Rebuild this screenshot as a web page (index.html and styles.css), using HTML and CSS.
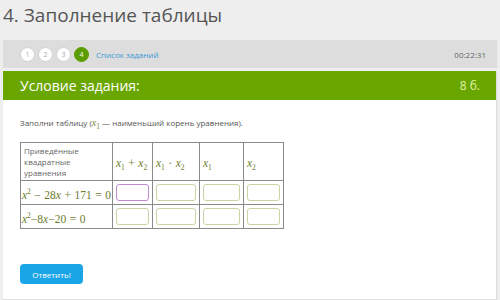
FILE: index.html
```html
<!DOCTYPE html>
<html lang="ru">
<head>
  <meta charset="UTF-8">
  <title>Заполнение таблицы</title>
  <link rel="stylesheet" href="styles.css">
</head>
<body>

<div class="page">
  <!-- Title -->
  <h1>4. Заполнение таблицы</h1>

  <!-- Task navigation -->
  <div class="nav">
    <div class="steps">
      <span class="step">1</span>
      <span class="step">2</span>
      <span class="step">3</span>
      <span class="step current">4</span>
      <a class="task-list" href="#">Список заданий</a>
    </div>
    <span class="timer">00:22:31</span>
  </div>

  <!-- Task -->
  <div class="task">
    <div class="task-head">
      <span class="task-title">Условие задания:</span>
      <span class="points">8 б.</span>
    </div>
    <div class="task-body">
      <p class="question">Заполни таблицу (<span class="m"><i>x</i><sub>1</sub></span> — наименьший корень уравнения).</p>

      <table class="grid">
        <tr class="head">
          <td class="eq-col">Приведённые квадратные уравнения</td>
          <td class="c2"><span class="m"><i>x</i><sub>1</sub><span class="op">+</span><i>x</i><sub>2</sub></span></td>
          <td class="c3"><span class="m"><i>x</i><sub>1</sub><span class="op">·</span><i>x</i><sub>2</sub></span></td>
          <td class="c4"><span class="m"><i>x</i><sub>1</sub></span></td>
          <td class="c5"><span class="m"><i>x</i><sub>2</sub></span></td>
        </tr>
        <tr>
          <td class="eq"><span class="m"><i>x</i><sup>2</sup><span class="op">−</span>28<i>x</i><span class="op">+</span>171<span class="op">=</span>0</span></td>
          <td><input class="field active" type="text"></td>
          <td><input class="field" type="text"></td>
          <td><input class="field" type="text"></td>
          <td><input class="field" type="text"></td>
        </tr>
        <tr>
          <td class="eq"><span class="m"><i>x</i><sup>2</sup>−8<i>x</i>−20<span class="op">=</span>0</span></td>
          <td><input class="field" type="text"></td>
          <td><input class="field" type="text"></td>
          <td><input class="field" type="text"></td>
          <td><input class="field" type="text"></td>
        </tr>
      </table>

      <button class="answer">Ответить!</button>
    </div>
  </div>
</div>

</body>
</html>
```

FILE: styles.css
```css
/* Basic Styles */
body {
  font-family: "Open Sans", Arial, sans-serif;
  margin: 0;
  padding: 0;
  background-color: #eeeeee;
  color: #555;
}
.page {
  padding: 0 3px;
}
h1 {
  font-size: 19px;
  font-weight: normal;
  color: #555;
  margin: 0;
  height: 40px;
  line-height: 30px;
}

/* Navigation */
.nav {
  display: flex;
  justify-content: space-between;
  align-items: center;
  height: 28px;
  background-color: #dddddd;
  padding: 0 11px 0 17px;
}
.steps {
  display: flex;
  align-items: center;
  gap: 3px;
}
.step {
  width: 13px;
  height: 13px;
  border-radius: 50%;
  background-color: #fff;
  border: 1px solid #d0d0d0;
  font-size: 7px;
  color: #aaa;
  display: flex;
  align-items: center;
  justify-content: center;
}
.step.current {
  background-color: #5b9c00;
  border-color: #5b9c00;
  color: #fff;
}
.task-list {
  font-size: 8px;
  color: #3a9ad6;
  text-decoration: none;
  margin-left: 4px;
}
.timer {
  font-size: 8px;
  color: #666;
}

/* Task */
.task {
  margin-top: 3px;
  background-color: #fff;
  border-bottom: 2px solid #ddd;
  border-right: 1px solid #ddd;
}
.task-head {
  display: flex;
  justify-content: space-between;
  align-items: center;
  height: 29px;
  background-color: #6aa600;
  padding: 0 16px 0 17px;
}
.task-title {
  font-size: 14px;
  color: #fff;
}
.points {
  font-size: 12px;
  color: #e0f4a8;
}
.task-body {
  padding: 17px 17px 15px;
}
.question {
  font-size: 8px;
  margin: 0 0 11px;
  color: #555;
}

/* Math */
.m {
  font-family: "Liberation Serif", "DejaVu Serif", serif;
  font-size: 11.5px;
  color: #6b7d2b;
  white-space: nowrap;
}
.m i {
  font-style: italic;
}
.m .op {
  margin: 0 3.5px;
}
.question .m {
  font-size: 10px;
  color: #7a8a40;
}
.m sub,
.m sup {
  font-size: 7.5px;
  font-style: normal;
}

/* Table */
.grid {
  border-collapse: collapse;
}
.grid td {
  border: 1px solid #8a8a8a;
  padding: 0 3px;
  height: 23px;
}
.grid .head td {
  height: 35px;
}
.eq-col {
  width: 85px;
  font-size: 8px;
  line-height: 11px;
  color: #666;
  vertical-align: top;
  padding-top: 2px !important;
}
.c2 { width: 33px; }
.c3 { width: 40px; }
.c4 { width: 37px; }
.c5 { width: 33px; }
.eq {
  padding: 0 1px !important;
}
.field {
  display: block;
  width: 100%;
  height: 17px;
  box-sizing: border-box;
  border: 1px solid #c9d4a4;
  border-radius: 3px;
  margin: 0;
}
.field.active {
  border-color: #c08cd0;
}

/* Button */
.answer {
  margin-top: 35px;
  background-color: #1aa5e6;
  color: #fff;
  border: none;
  border-radius: 4px;
  font-family: "Open Sans", Arial, sans-serif;
  font-size: 8px;
  width: 63px;
  height: 20px;
  cursor: pointer;
}
```
